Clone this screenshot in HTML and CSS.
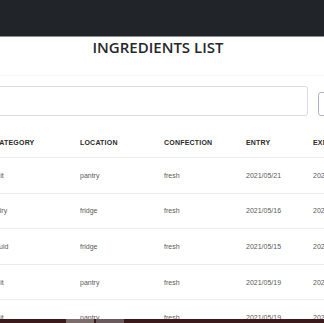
FILE: index.html
```html
<!DOCTYPE html>
<html lang="en">
<head>
  <meta charset="UTF-8">
  <title>Ingredients List</title>
  <meta name="viewport" content="width=device-width, initial-scale=1.0">
  <link rel="stylesheet" href="styles.css">
</head>
<body>
  <nav class="navbar"></nav>

  <div class="title-bar">
    <h1>INGREDIENTS LIST</h1>
  </div>

  <div class="search-row">
    <input type="text" class="search-input">
    <button class="search-btn"></button>
  </div>

  <div class="table-wrap">
    <table class="ingredients">
      <colgroup>
        <col class="c-cat"><col class="c-loc"><col class="c-conf"><col class="c-entry"><col class="c-exp">
      </colgroup>
      <thead>
        <tr>
          <th>Category</th>
          <th>Location</th>
          <th>Confection</th>
          <th>Entry</th>
          <th>Expiry</th>
        </tr>
      </thead>
      <tbody>
        <tr><td>fruit</td><td>pantry</td><td>fresh</td><td>2021/05/21</td><td>2021/05/28</td></tr>
        <tr><td>dairy</td><td>fridge</td><td>fresh</td><td>2021/05/16</td><td>2021/05/23</td></tr>
        <tr><td>liquid</td><td>fridge</td><td>fresh</td><td>2021/05/15</td><td>2021/05/22</td></tr>
        <tr><td>fruit</td><td>pantry</td><td>fresh</td><td>2021/05/19</td><td>2021/05/26</td></tr>
        <tr><td>fruit</td><td>pantry</td><td>fresh</td><td>2021/05/19</td><td>2021/05/26</td></tr>
      </tbody>
    </table>
  </div>

  <div class="bottom-bar">
    <span class="tab"></span>
    <span class="tab tab-active"></span>
  </div>
</body>
</html>
```

FILE: styles.css
```css
:root {
  --dark: #212529;
  --text: #212529;
  --muted: #5a5a5a;
  --line: #ececec;
}

html, body {
  margin: 0;
  padding: 0;
  height: 100%;
  overflow: hidden;
  background: #ffffff;
}

body {
  font-family: "Liberation Sans", Arial, sans-serif;
  color: var(--text);
}

.navbar {
  height: 36px;
  background-color: var(--dark);
  border-bottom: 1px solid #8a8d90;
}

.title-bar {
  height: 38px;
  padding-right: 8px;
  border-bottom: 1px solid #f6f6f6;
  text-align: center;
}

.title-bar h1 {
  margin: 0;
  padding-top: 0;
  font-family: "Open Sans", "Noto Sans", sans-serif;
  font-size: 15px;
  font-weight: 600;
  line-height: 20px;
  color: #25282b;
}

.search-row {
  display: flex;
  align-items: flex-start;
  gap: 10px;
  margin: 10px 0 0 -20px;
  width: 400px;
}

.search-input {
  flex: none;
  width: 328px;
  height: 30px;
  box-sizing: border-box;
  border: 1px solid #dcdcdc;
  border-radius: 3px;
  outline: none;
  padding: 0 8px;
}

.search-btn {
  flex: none;
  width: 40px;
  height: 24px;
  margin-top: 6px;
  background: #fff;
  border: 1px solid #a9b4cc;
  border-radius: 3px;
}

.table-wrap {
  margin: 12px 0 0 -14px;
}

.ingredients {
  border-collapse: collapse;
  table-layout: fixed;
  width: 440px;
  font-size: 7px;
}

.c-cat { width: 86px; }
.c-loc { width: 84px; }
.c-conf { width: 82px; }
.c-entry { width: 67px; }
.c-exp { width: 121px; }

.ingredients th,
.ingredients td {
  text-align: left;
  padding: 0 8px;
  white-space: nowrap;
}

.ingredients th {
  height: 29px;
  font-weight: bold;
  text-transform: uppercase;
  letter-spacing: 0.2px;
  color: #2a2a2a;
  border-bottom: 1px solid var(--line);
}

.ingredients td {
  height: 34.6px;
  color: var(--muted);
  border-bottom: 1px solid var(--line);
}

.ingredients td:first-child {
  padding-left: 6px;
}

.bottom-bar {
  position: fixed;
  left: 0;
  right: 0;
  bottom: 0;
  height: 4px;
  background: #3c1a1c;
  display: flex;
  padding-left: 66px;
  gap: 2px;
}

.tab {
  width: 28px;
  height: 4px;
  background: #7d6c6c;
}

.tab-active {
  background: #6a5a5e;
}
```
